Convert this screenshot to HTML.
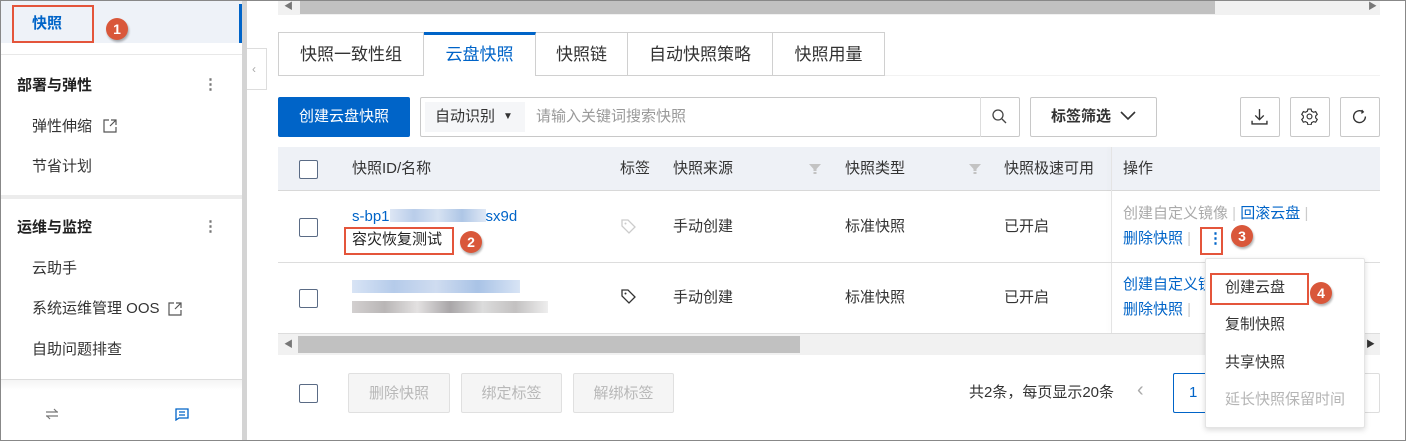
<!DOCTYPE html>
<html><head><meta charset="utf-8"><style>
*{box-sizing:border-box;margin:0;padding:0}
body{width:1406px;height:441px;overflow:hidden;background:#fff;font-family:"Liberation Sans","Noto Sans CJK SC",sans-serif;font-size:15px;color:#333;position:relative}
.a{position:absolute}
.t{position:absolute;white-space:nowrap;line-height:20px}
.cb{position:absolute;width:19px;height:19px;border:1px solid #5a6b85;border-radius:2px;background:#fff}
.badge{position:absolute;width:22px;height:22px;border-radius:50%;background:#d9573a;color:#fff;font-weight:bold;font-size:14px;text-align:center;line-height:22px;box-shadow:1px 2px 2px rgba(0,0,0,.3)}
.red{position:absolute;border:2px solid #e4553b}
.btn{position:absolute;border:1px solid #c8c8c8;background:#fff;border-radius:2px}
.dis{position:absolute;border:1px solid #e0e0e0;background:#f5f5f5;color:#b8b8b8;border-radius:2px;text-align:center;line-height:40px;font-size:15px}
.tab{position:absolute;top:32px;height:44px;border:1px solid #d0d0d0;border-left:none;text-align:center;line-height:43px;font-size:17px;background:#fff}
.blue{color:#0064c8}
.sep{color:#ccc}
</style></head><body>
<div class="a" style="left:0;top:0;width:1406px;height:441px;border:1px solid #888;z-index:50;pointer-events:none"></div>

<!-- sidebar -->
<div class="a" style="left:0;top:0;width:242px;height:441px;background:#fff"></div>
<div class="a" style="left:0;top:0;width:242px;height:43px;background:#eef2f8"></div>
<div class="a" style="left:239px;top:4px;width:3px;height:39px;background:#0064c8"></div>
<div class="a" style="left:242px;top:0;width:5px;height:441px;background:#d4d4d4"></div>
<div class="red" style="left:12px;top:5px;width:82px;height:38px"></div>
<div class="t blue" style="left:32px;top:14px;font-weight:bold">快照</div>
<div class="badge" style="left:106px;top:18px">1</div>
<div class="a" style="left:0;top:54px;width:242px;height:1px;background:#e8e8e8"></div>
<div class="t" style="left:17px;top:76px;font-weight:bold;color:#222">部署与弹性</div>
<div class="t" style="left:203px;top:75px;color:#777;font-weight:bold">⋮</div>
<div class="t" style="left:32px;top:117px">弹性伸缩</div>
<svg class="a" style="left:103px;top:119px" width="14" height="14" viewBox="0 0 14 14"><path d="M6 1H1v12h12V8M8 1h5v5M13 1L7 7" fill="none" stroke="#555" stroke-width="1.2"/></svg>
<div class="t" style="left:32px;top:157px">节省计划</div>
<div class="a" style="left:0;top:195px;width:242px;height:4px;background:#ececec"></div>
<div class="t" style="left:17px;top:218px;font-weight:bold;color:#222">运维与监控</div>
<div class="t" style="left:203px;top:217px;color:#777;font-weight:bold">⋮</div>
<div class="t" style="left:32px;top:259px">云助手</div>
<div class="t" style="left:32px;top:299px">系统运维管理 OOS</div>
<svg class="a" style="left:168px;top:302px" width="14" height="14" viewBox="0 0 14 14"><path d="M6 1H1v12h12V8M8 1h5v5M13 1L7 7" fill="none" stroke="#555" stroke-width="1.2"/></svg>
<div class="t" style="left:32px;top:340px">自助问题排查</div>
<div class="a" style="left:0;top:379px;width:242px;height:1px;background:#ddd"></div>
<div class="a" style="left:0;top:380px;width:242px;height:10px;background:linear-gradient(#f4f4f4,#fff)"></div>
<svg class="a" style="left:45px;top:408px" width="14" height="12" viewBox="0 0 14 12"><path d="M1 4h12M9 1l3 3M13 8H1M5 11L2 8" fill="none" stroke="#777" stroke-width="1.2"/></svg>
<svg class="a" style="left:175px;top:408px" width="14" height="13" viewBox="0 0 14 13"><path d="M1 1h12v9H4l-3 2zM4 4h6M4 7h6" fill="none" stroke="#0064c8" stroke-width="1.3"/></svg>
<div class="a" style="left:247px;top:48px;width:20px;height:42px;border:1px solid #ddd;border-left:none;background:#fff"></div>
<div class="t" style="left:252px;top:59px;color:#aaa;font-size:12px">‹</div>

<!-- top scrollbar -->
<div class="a" style="left:278px;top:0;width:1102px;height:15px;background:#f1f1f1"></div>
<div class="a" style="left:300px;top:0;width:915px;height:14px;background:#c1c1c1"></div>
<div class="t" style="left:284px;top:-4px;color:#777;font-size:9px">◀</div>
<div class="t" style="left:1368px;top:-4px;color:#777;font-size:9px">▶</div>

<!-- tabs -->
<div class="tab" style="left:278px;width:146px;border-left:1px solid #d0d0d0">快照一致性组</div>
<div class="tab blue" style="left:424px;width:112px;border-bottom:none;border-top:3px solid #0064c8;line-height:40px">云盘快照</div>
<div class="tab" style="left:536px;width:92px">快照链</div>
<div class="tab" style="left:628px;width:145px">自动快照策略</div>
<div class="tab" style="left:773px;width:112px">快照用量</div>
<div class="a" style="left:885px;top:75px;width:495px;height:1px;background:#f2f2f2"></div>

<!-- toolbar -->
<div class="a" style="left:278px;top:97px;width:132px;height:40px;background:#0064c8;border-radius:2px;color:#fff;text-align:center;line-height:40px">创建云盘快照</div>
<div class="btn" style="left:420px;top:97px;width:600px;height:40px"></div>
<div class="a" style="left:425px;top:102px;width:100px;height:30px;background:#f5f6f8"></div>
<div class="t" style="left:435px;top:107px">自动识别</div>
<div class="t" style="left:503px;top:107px;font-size:10px;color:#333">▼</div>
<div class="t" style="left:536px;top:107px;color:#999">请输入关键词搜索快照</div>
<div class="a" style="left:980px;top:97px;width:1px;height:40px;background:#ddd"></div>
<svg class="a" style="left:992px;top:109px" width="15" height="15" viewBox="0 0 15 15"><circle cx="6" cy="6" r="5" fill="none" stroke="#444" stroke-width="1.3"/><path d="M10 10l4 4" stroke="#444" stroke-width="1.3"/></svg>
<div class="btn" style="left:1030px;top:97px;width:127px;height:40px"></div>
<div class="t" style="left:1051px;top:107px;font-weight:bold">标签筛选</div>
<svg class="a" style="left:1120px;top:111px" width="16" height="10" viewBox="0 0 16 10"><path d="M1 1l7 7 7-7" fill="none" stroke="#333" stroke-width="1.6"/></svg>
<div class="btn" style="left:1240px;top:97px;width:40px;height:40px"></div>
<svg class="a" style="left:1251px;top:108px" width="17" height="17" viewBox="0 0 16 16"><path d="M8 1v10M4 7l4 4 4-4M1 12v3h14v-3" fill="none" stroke="#333" stroke-width="1.3"/></svg>
<div class="btn" style="left:1290px;top:97px;width:40px;height:40px"></div>
<svg class="a" style="left:1301px;top:108px" width="17" height="17" viewBox="0 0 16 16"><path d="M6.5 1h3l.5 2 1.8 1 2-.6 1.5 2.6-1.5 1.5v1.8l1.5 1.5-1.5 2.6-2-.6-1.8 1-.5 2h-3l-.5-2-1.8-1-2 .6L.7 10.8l1.5-1.5V7.5L.7 6 2.2 3.4l2 .6L6 3z" fill="none" stroke="#333" stroke-width="1.1"/><circle cx="8" cy="8" r="2.3" fill="none" stroke="#333" stroke-width="1.1"/></svg>
<div class="btn" style="left:1340px;top:97px;width:40px;height:40px"></div>
<svg class="a" style="left:1352px;top:109px" width="15" height="15" viewBox="0 0 14 14"><path d="M10 2.5A5.5 5.5 0 1 0 12.5 7M9 1l1.5 1.7L8.7 4" fill="none" stroke="#333" stroke-width="1.3"/></svg>

<!-- table header -->
<div class="a" style="left:278px;top:147px;width:1102px;height:44px;background:#eef1f6;border-bottom:1px solid #d8d8d8"></div>
<div class="cb" style="left:299px;top:160px"></div>
<div class="t" style="left:352px;top:159px">快照ID/名称</div>
<div class="t" style="left:620px;top:159px">标签</div>
<div class="t" style="left:673px;top:159px">快照来源</div>
<svg class="a" style="left:809px;top:163px" width="12" height="12" viewBox="0 0 12 12"><path d="M0 1h12L7.5 6v2h-3V6z" fill="#c3c3c3"/><rect x="4.5" y="9" width="3" height="2" fill="#c3c3c3"/></svg>
<div class="t" style="left:845px;top:159px">快照类型</div>
<svg class="a" style="left:969px;top:163px" width="12" height="12" viewBox="0 0 12 12"><path d="M0 1h12L7.5 6v2h-3V6z" fill="#c3c3c3"/><rect x="4.5" y="9" width="3" height="2" fill="#c3c3c3"/></svg>
<div class="t" style="left:1004px;top:159px">快照极速可用</div>
<div class="a" style="left:1111px;top:147px;width:1px;height:186px;background:#e4e4e4;box-shadow:-2px 0 4px rgba(0,0,0,.06)"></div>
<div class="t" style="left:1123px;top:159px">操作</div>

<!-- rows -->
<div class="a" style="left:278px;top:262px;width:1102px;height:1px;background:#ddd"></div>
<div class="cb" style="left:299px;top:218px"></div>
<div class="t blue" style="left:352px;top:207px">s-bp1<span style="display:inline-block;width:96px;height:13px;background:linear-gradient(90deg,#dde6f4,#b9cdea,#d6e2f2,#aec6e6,#dfe8f5);vertical-align:-1px"></span>sx9d</div>
<div class="red" style="left:344px;top:227px;width:110px;height:28px"></div>
<div class="t" style="left:352px;top:230px;color:#222">容灾恢复测试</div>
<div class="badge" style="left:460px;top:231px">2</div>
<svg class="a" style="left:621px;top:219px" width="15" height="15" viewBox="0 0 15 15"><path d="M1 1h6l7 7-6 6-7-7z" fill="none" stroke="#ccc" stroke-width="1.3"/><circle cx="4.5" cy="4.5" r="1" fill="#ccc"/></svg>
<div class="t" style="left:673px;top:217px">手动创建</div>
<div class="t" style="left:845px;top:217px">标准快照</div>
<div class="t" style="left:1004px;top:217px">已开启</div>
<div class="t" style="left:1123px;top:204px;color:#aaa">创建自定义镜像 <span class="sep">|</span> <span class="blue">回滚云盘</span> <span class="sep">|</span></div>
<div class="t blue" style="left:1123px;top:229px">删除快照 <span class="sep">|</span></div>
<div class="red" style="left:1200px;top:227px;width:23px;height:28px"></div>
<div class="t blue" style="left:1208px;top:229px;font-weight:bold">⋮</div>
<div class="badge" style="left:1231px;top:225px">3</div>

<div class="a" style="left:278px;top:333px;width:1102px;height:1px;background:#ddd"></div>
<div class="cb" style="left:299px;top:289px"></div>
<div class="a" style="left:352px;top:280px;width:168px;height:13px;background:linear-gradient(90deg,#d8e4f5,#b5cbea,#cfdcf0,#a9c3e6,#d8e4f5)"></div>
<div class="a" style="left:352px;top:301px;width:196px;height:12px;background:linear-gradient(90deg,#d3d0d0,#b9b6b6,#e3e1e1,#a9a6a8,#dcdcdc,#c3c1c1,#eee)"></div>
<svg class="a" style="left:621px;top:289px" width="15" height="15" viewBox="0 0 15 15"><path d="M1 1h6l7 7-6 6-7-7z" fill="none" stroke="#333" stroke-width="1.3"/><circle cx="4.5" cy="4.5" r="1" fill="#333"/></svg>
<div class="t" style="left:673px;top:288px">手动创建</div>
<div class="t" style="left:845px;top:288px">标准快照</div>
<div class="t" style="left:1004px;top:288px">已开启</div>
<div class="t blue" style="left:1123px;top:275px">创建自定义镜像</div>
<div class="t blue" style="left:1123px;top:300px">删除快照 <span class="sep">|</span></div>

<!-- bottom scrollbar -->
<div class="a" style="left:278px;top:334px;width:1102px;height:21px;background:#f1f1f1"></div>
<div class="a" style="left:298px;top:336px;width:502px;height:17px;background:#c1c1c1"></div>
<div class="t" style="left:284px;top:334px;color:#777;font-size:9px">◀</div>
<div class="t" style="left:1366px;top:334px;color:#333;font-size:9px">▶</div>

<!-- footer -->
<div class="cb" style="left:299px;top:384px"></div>
<div class="dis" style="left:348px;top:373px;width:102px;height:40px">删除快照</div>
<div class="dis" style="left:461px;top:373px;width:101px;height:40px">绑定标签</div>
<div class="dis" style="left:573px;top:373px;width:101px;height:40px">解绑标签</div>
<div class="t" style="left:969px;top:383px">共2条，每页显示20条</div>
<div class="t" style="left:1137px;top:380px;color:#aaa;font-size:20px">‹</div>
<div class="btn" style="left:1173px;top:373px;width:207px;height:40px;border-color:#ddd"></div>
<div class="a" style="left:1173px;top:373px;width:40px;height:40px;border:1px solid #0064c8;border-radius:2px"></div>
<div class="t blue" style="left:1189px;top:383px">1</div>

<!-- dropdown -->
<div class="a" style="left:1205px;top:258px;width:160px;height:170px;background:#fff;border:1px solid #e4e4e4;border-radius:2px;box-shadow:0 2px 6px rgba(0,0,0,.15)"></div>
<div class="red" style="left:1210px;top:273px;width:99px;height:32px"></div>
<div class="t" style="left:1225px;top:278px">创建云盘</div>
<div class="badge" style="left:1310px;top:282px">4</div>
<div class="t" style="left:1225px;top:315px">复制快照</div>
<div class="t" style="left:1225px;top:353px">共享快照</div>
<div class="t" style="left:1225px;top:390px;color:#b5b5b5">延长快照保留时间</div>
</body></html>
